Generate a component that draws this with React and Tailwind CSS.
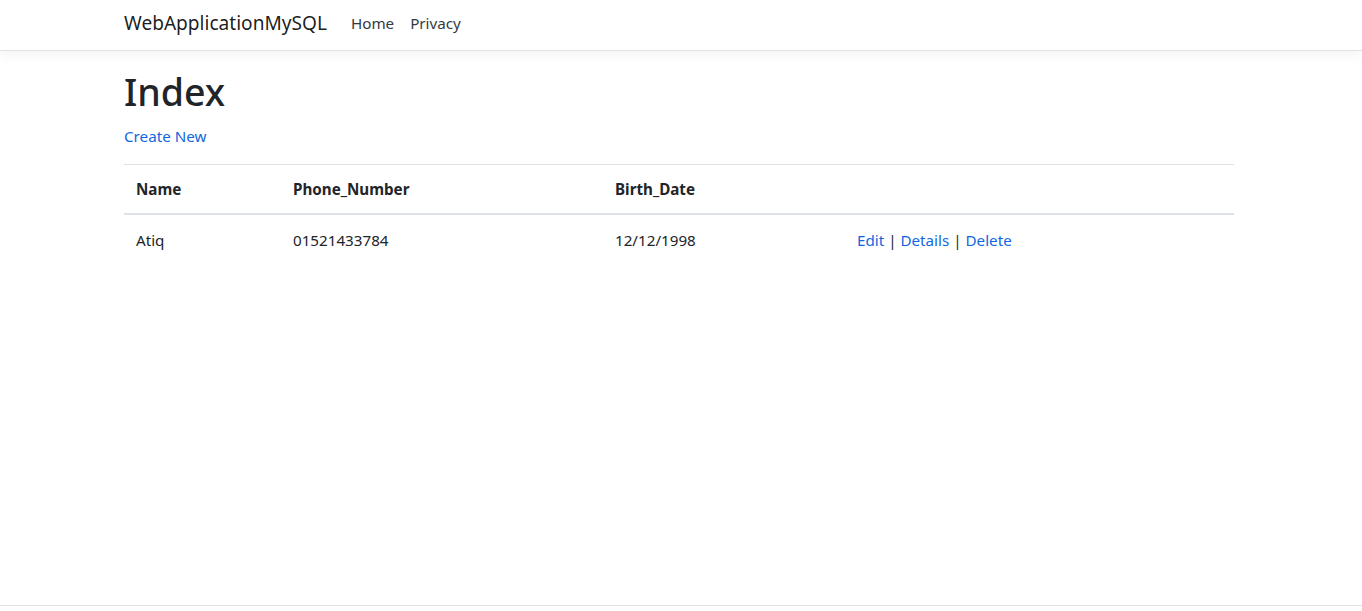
export default function App() {
  const rows = [{ name: "Atiq", phone: "01521433784", birth: "12/12/1998" }];

  return (
    <div
      className="min-h-[611px] flex flex-col bg-white text-[#212529] text-[15.2px]"
      style={{ fontFamily: '"Segoe UI", "Noto Sans", sans-serif' }}
    >
      <header className="h-[51px] border-b border-[#dee2e6] bg-white shadow-[0_4px_12px_rgba(0,0,0,0.05)] shrink-0">
        <nav className="mx-auto w-[1140px] pl-[13px] pr-[17px] h-[50px] pb-[5px] flex items-center">
          <a className="text-[19.1px] text-[rgba(0,0,0,0.9)] mr-4 leading-[30px]" href="#">
            WebApplicationMySQL
          </a>
          <ul className="flex">
            <li>
              <a className="px-2 text-[#343a40] leading-6" href="#">
                Home
              </a>
            </li>
            <li>
              <a className="px-2 text-[#343a40] leading-6" href="#">
                Privacy
              </a>
            </li>
          </ul>
        </nav>
      </header>

      <main className="flex-1 mt-[17px] pb-4">
        <div className="mx-auto w-[1140px] pl-[13px] pr-[17px]">
          <h1 className="text-[37.5px] font-medium leading-[48px] mb-2">Index</h1>
          <p className="mb-4 leading-6">
            <a className="text-[#1266e0]" href="#">
              Create New
            </a>
          </p>
          <table className="w-full border-collapse text-left">
            <thead>
              <tr>
                <th className="w-[157px] p-3 leading-6 font-bold border-t border-b-2 border-[#dee2e6]">Name</th>
                <th className="w-[322px] p-3 leading-6 font-bold border-t border-b-2 border-[#dee2e6]">Phone_Number</th>
                <th className="w-[242px] p-3 leading-6 font-bold border-t border-b-2 border-[#dee2e6]">Birth_Date</th>
                <th className="p-3 leading-6 border-t border-b-2 border-[#dee2e6]"></th>
              </tr>
            </thead>
            <tbody>
              {rows.map((r) => (
                <tr key={r.phone}>
                  <td className="px-3 pt-[13px] pb-[11px] leading-6">{r.name}</td>
                  <td className="px-3 pt-[13px] pb-[11px] leading-6">{r.phone}</td>
                  <td className="px-3 pt-[13px] pb-[11px] leading-6">{r.birth}</td>
                  <td className="px-3 pt-[13px] pb-[11px] leading-6">
                    <a className="text-[#1266e0]" href="#">Edit</a> |{" "}
                    <a className="text-[#1266e0]" href="#">Details</a> |{" "}
                    <a className="text-[#1266e0]" href="#">Delete</a>
                  </td>
                </tr>
              ))}
            </tbody>
          </table>
        </div>
      </main>

      <footer className="h-[6px] border-t border-[#dee2e6] shrink-0"></footer>
    </div>
  );
}
